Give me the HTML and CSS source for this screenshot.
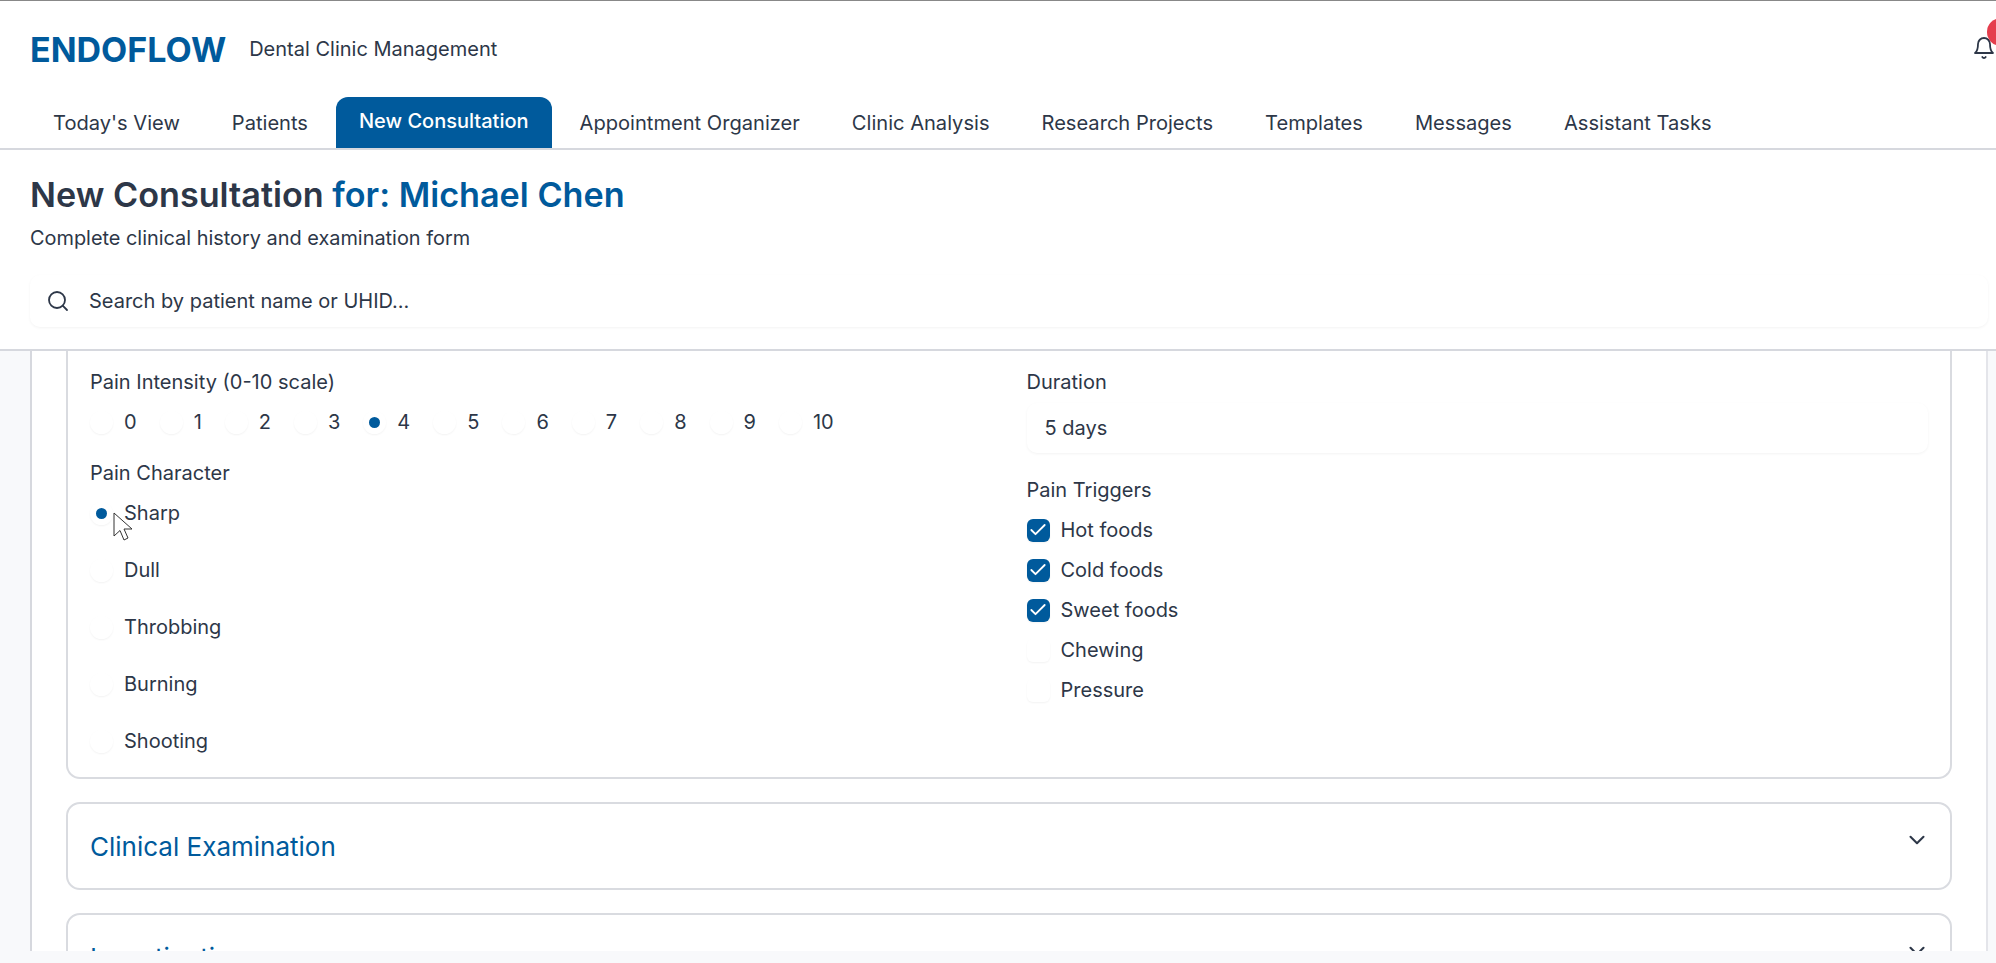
FILE: index.html
```html
<!DOCTYPE html>
<html lang="en">
<head>
    <meta charset="UTF-8">
    <meta name="viewport" content="width=device-width, initial-scale=1.0">
    <title>ENDOFLOW - New Consultation</title>
    <link rel="stylesheet" href="styles.css">
</head>
<body>
    <div class="page">
        <header class="top">
            <div class="brand-row">
                <span class="logo">ENDOFLOW</span>
                <span class="tagline">Dental Clinic Management</span>
                <div class="bell">
                    <svg width="24" height="24" viewBox="0 0 24 24" fill="none" stroke="#2d3748" stroke-width="1.8" stroke-linecap="round" stroke-linejoin="round"><path d="M6 8a6 6 0 0 1 12 0c0 7 3 9 3 9H3s3-2 3-9"/><path d="M10.3 21a1.94 1.94 0 0 0 3.4 0"/></svg>
                    <span class="bell-dot"></span>
                </div>
            </div>
            <nav class="tabs">
                <a class="tab">Today's View</a>
                <a class="tab">Patients</a>
                <a class="tab active">New Consultation</a>
                <a class="tab">Appointment Organizer</a>
                <a class="tab">Clinic Analysis</a>
                <a class="tab">Research Projects</a>
                <a class="tab">Templates</a>
                <a class="tab">Messages</a>
                <a class="tab">Assistant Tasks</a>
            </nav>
        </header>

        <section class="heading">
            <h1>New Consultation <span class="for-name">for: Michael Chen</span></h1>
            <p class="sub">Complete clinical history and examination form</p>
            <div class="search">
                <svg width="24" height="24" viewBox="0 0 24 24" fill="none" stroke="#2d3748" stroke-width="1.8" stroke-linecap="round" stroke-linejoin="round"><circle cx="11" cy="11" r="8"/><path d="m21 21-4.3-4.3"/></svg>
                <span>Search by patient name or UHID...</span>
            </div>
        </section>

        <main class="content">
            <div class="sheet">
                <div class="card open">
                    <div class="col">
                        <div class="label">Pain Intensity (0-10 scale)</div>
                        <div class="scale">
                            <label class="opt"><i class="radio"></i>0</label>
                            <label class="opt"><i class="radio"></i>1</label>
                            <label class="opt"><i class="radio"></i>2</label>
                            <label class="opt"><i class="radio"></i>3</label>
                            <label class="opt"><i class="radio on"></i>4</label>
                            <label class="opt"><i class="radio"></i>5</label>
                            <label class="opt"><i class="radio"></i>6</label>
                            <label class="opt"><i class="radio"></i>7</label>
                            <label class="opt"><i class="radio"></i>8</label>
                            <label class="opt"><i class="radio"></i>9</label>
                            <label class="opt"><i class="radio"></i>10</label>
                        </div>
                        <div class="label second">Pain Character</div>
                        <div class="stack">
                            <label class="opt"><i class="radio on"></i>Sharp
                                <svg class="cursor" width="20" height="29" viewBox="0 0 20 29"><path d="M1 1v23l6-5.5 4 9.5 4-2-4-9h8z" fill="#fff" stroke="#333" stroke-width="1"/></svg>
                            </label>
                            <label class="opt"><i class="radio"></i>Dull</label>
                            <label class="opt"><i class="radio"></i>Throbbing</label>
                            <label class="opt"><i class="radio"></i>Burning</label>
                            <label class="opt"><i class="radio"></i>Shooting</label>
                        </div>
                    </div>
                    <div class="col">
                        <div class="label">Duration</div>
                        <div class="field">5 days</div>
                        <div class="label triggers">Pain Triggers</div>
                        <div class="checks">
                            <label class="opt"><i class="check on"><svg width="20" height="20" viewBox="0 0 24 24" fill="none" stroke="#fff" stroke-width="2.2" stroke-linecap="round" stroke-linejoin="round"><path d="M20 6 9 17l-5-5"/></svg></i>Hot foods</label>
                            <label class="opt"><i class="check on"><svg width="20" height="20" viewBox="0 0 24 24" fill="none" stroke="#fff" stroke-width="2.2" stroke-linecap="round" stroke-linejoin="round"><path d="M20 6 9 17l-5-5"/></svg></i>Cold foods</label>
                            <label class="opt"><i class="check on"><svg width="20" height="20" viewBox="0 0 24 24" fill="none" stroke="#fff" stroke-width="2.2" stroke-linecap="round" stroke-linejoin="round"><path d="M20 6 9 17l-5-5"/></svg></i>Sweet foods</label>
                            <label class="opt"><i class="check"></i>Chewing</label>
                            <label class="opt"><i class="check"></i>Pressure</label>
                        </div>
                    </div>
                </div>

                <div class="card closed">
                    <span class="card-title">Clinical Examination</span>
                    <svg class="chev" width="26" height="26" viewBox="0 0 24 24" fill="none" stroke="#2d3748" stroke-width="1.9" stroke-linecap="round" stroke-linejoin="round"><path d="m6 9 6 6 6-6"/></svg>
                </div>
                <div class="card closed">
                    <span class="card-title">Investigations</span>
                    <svg class="chev" width="26" height="26" viewBox="0 0 24 24" fill="none" stroke="#2d3748" stroke-width="1.9" stroke-linecap="round" stroke-linejoin="round"><path d="m6 9 6 6 6-6"/></svg>
                </div>
            </div>
        </main>
    </div>
</body>
</html>
```

FILE: styles.css
```css
html, body {
    margin: 0;
    padding: 0;
    height: 100%;
    overflow: hidden;
}
body {
    background-color: #f8f9fb;
    font-family: Inter, "Noto Sans", sans-serif;
    color: #2d3748;
}
.page {
    height: 951px;
    display: flex;
    flex-direction: column;
    overflow: hidden;
}

/* header */
.top {
    background-color: #fff;
    border-top: 1px solid #888;
    border-bottom: 2px solid #d6d8de;
}
.brand-row {
    height: 96px;
    padding: 0 0 0 30px;
    display: flex;
    align-items: center;
    position: relative;
}
.logo {
    font-size: 34px;
    font-weight: 700;
    color: #005a9c;
}
.tagline {
    font-size: 20px;
    margin-left: 23px;
}
.bell {
    position: absolute;
    left: 1972px;
    top: 35px;
}
.bell-dot {
    position: absolute;
    left: 15px;
    top: -18px;
    width: 28px;
    height: 28px;
    border-radius: 50%;
    background-color: #e53e4d;
}
.tabs {
    display: flex;
    gap: 6px;
    padding-left: 30px;
    height: 51px;
}
.tab {
    padding: 0 23px;
    font-size: 20.1px;
    line-height: 52px;
}
.tab.active {
    background-color: #005a9c;
    color: #fff;
    font-size: 20px;
    font-weight: 500;
    border-radius: 12px 12px 0 0;
    line-height: 49px;
    margin: 0 -1px;
}

/* page heading */
.heading {
    background-color: #fff;
    border-bottom: 2px solid #d6d8de;
    padding: 0 8px 22px 30px;
}
h1 {
    margin: 0;
    padding-top: 23px;
    font-size: 34.2px;
    line-height: 44px;
    font-weight: 600;
}
.for-name {
    color: #005a9c;
}
.sub {
    margin: 8px 0 0;
    font-size: 19.9px;
    line-height: 26px;
}
.search {
    margin-top: 24px;
    height: 52px;
    border-radius: 10px;
    box-shadow: 0 1px 3px rgba(0, 0, 0, 0.05);
    display: flex;
    align-items: center;
    gap: 19px;
    padding-left: 16px;
    font-size: 20px;
}

/* scrolling form */
.content {
    flex: 1;
    min-height: 0;
    overflow: hidden;
    padding: 0 8px 0 30px;
}
.sheet {
    background-color: #fff;
    border-left: 2px solid #d6d8de;
    border-right: 2px solid #e4e5ea;
    padding: 0 34px;
    height: 100%;
}
.card {
    box-sizing: border-box;
    border: 2px solid #d9dbe0;
    border-radius: 14px;
    margin-bottom: 23px;
}
.card.open {
    height: 428px;
    border-top: none;
    border-top-left-radius: 0;
    border-top-right-radius: 0;
    padding: 18px 22px 0;
    display: grid;
    grid-template-columns: 1fr 1fr;
    column-gap: 35px;
}
.card.closed {
    height: 88px;
    padding: 0 22px;
    display: flex;
    align-items: center;
    justify-content: space-between;
}
.card-title {
    font-size: 26px;
    color: #005a9c;
}
.chev {
    margin-top: -12px;
    margin-right: -2px;
}
.label {
    font-size: 20px;
    line-height: 26px;
}
.label.second {
    margin-top: 25px;
}
.label.triggers {
    margin-top: 24px;
}
.opt {
    display: flex;
    align-items: center;
    font-size: 20px;
    line-height: 26px;
    position: relative;
}
.radio {
    width: 23px;
    height: 23px;
    border-radius: 50%;
    box-shadow: 0 1px 2px rgba(0, 0, 0, 0.05);
    margin-right: 11px;
    display: flex;
    align-items: center;
    justify-content: center;
    flex: none;
}
.radio.on::after {
    content: "";
    width: 11px;
    height: 11px;
    border-radius: 50%;
    background-color: #005a9c;
}
.scale {
    display: flex;
    margin-top: 14px;
    gap: 23px;
}
.stack {
    display: flex;
    flex-direction: column;
    gap: 31px;
    margin-top: 14px;
}
.cursor {
    position: absolute;
    left: 23px;
    top: 12px;
}
.field {
    margin-top: 8px;
    height: 50px;
    border-radius: 10px;
    box-shadow: 0 1px 3px rgba(0, 0, 0, 0.05);
    display: flex;
    align-items: center;
    padding-left: 18px;
    font-size: 20px;
}
.checks {
    display: flex;
    flex-direction: column;
    gap: 14px;
    margin-top: 14px;
}
.check {
    width: 23px;
    height: 23px;
    border-radius: 6px;
    box-shadow: 0 1px 2px rgba(0, 0, 0, 0.05);
    margin-right: 11px;
    display: flex;
    align-items: center;
    justify-content: center;
    flex: none;
}
.check.on {
    background-color: #005a9c;
}
```
